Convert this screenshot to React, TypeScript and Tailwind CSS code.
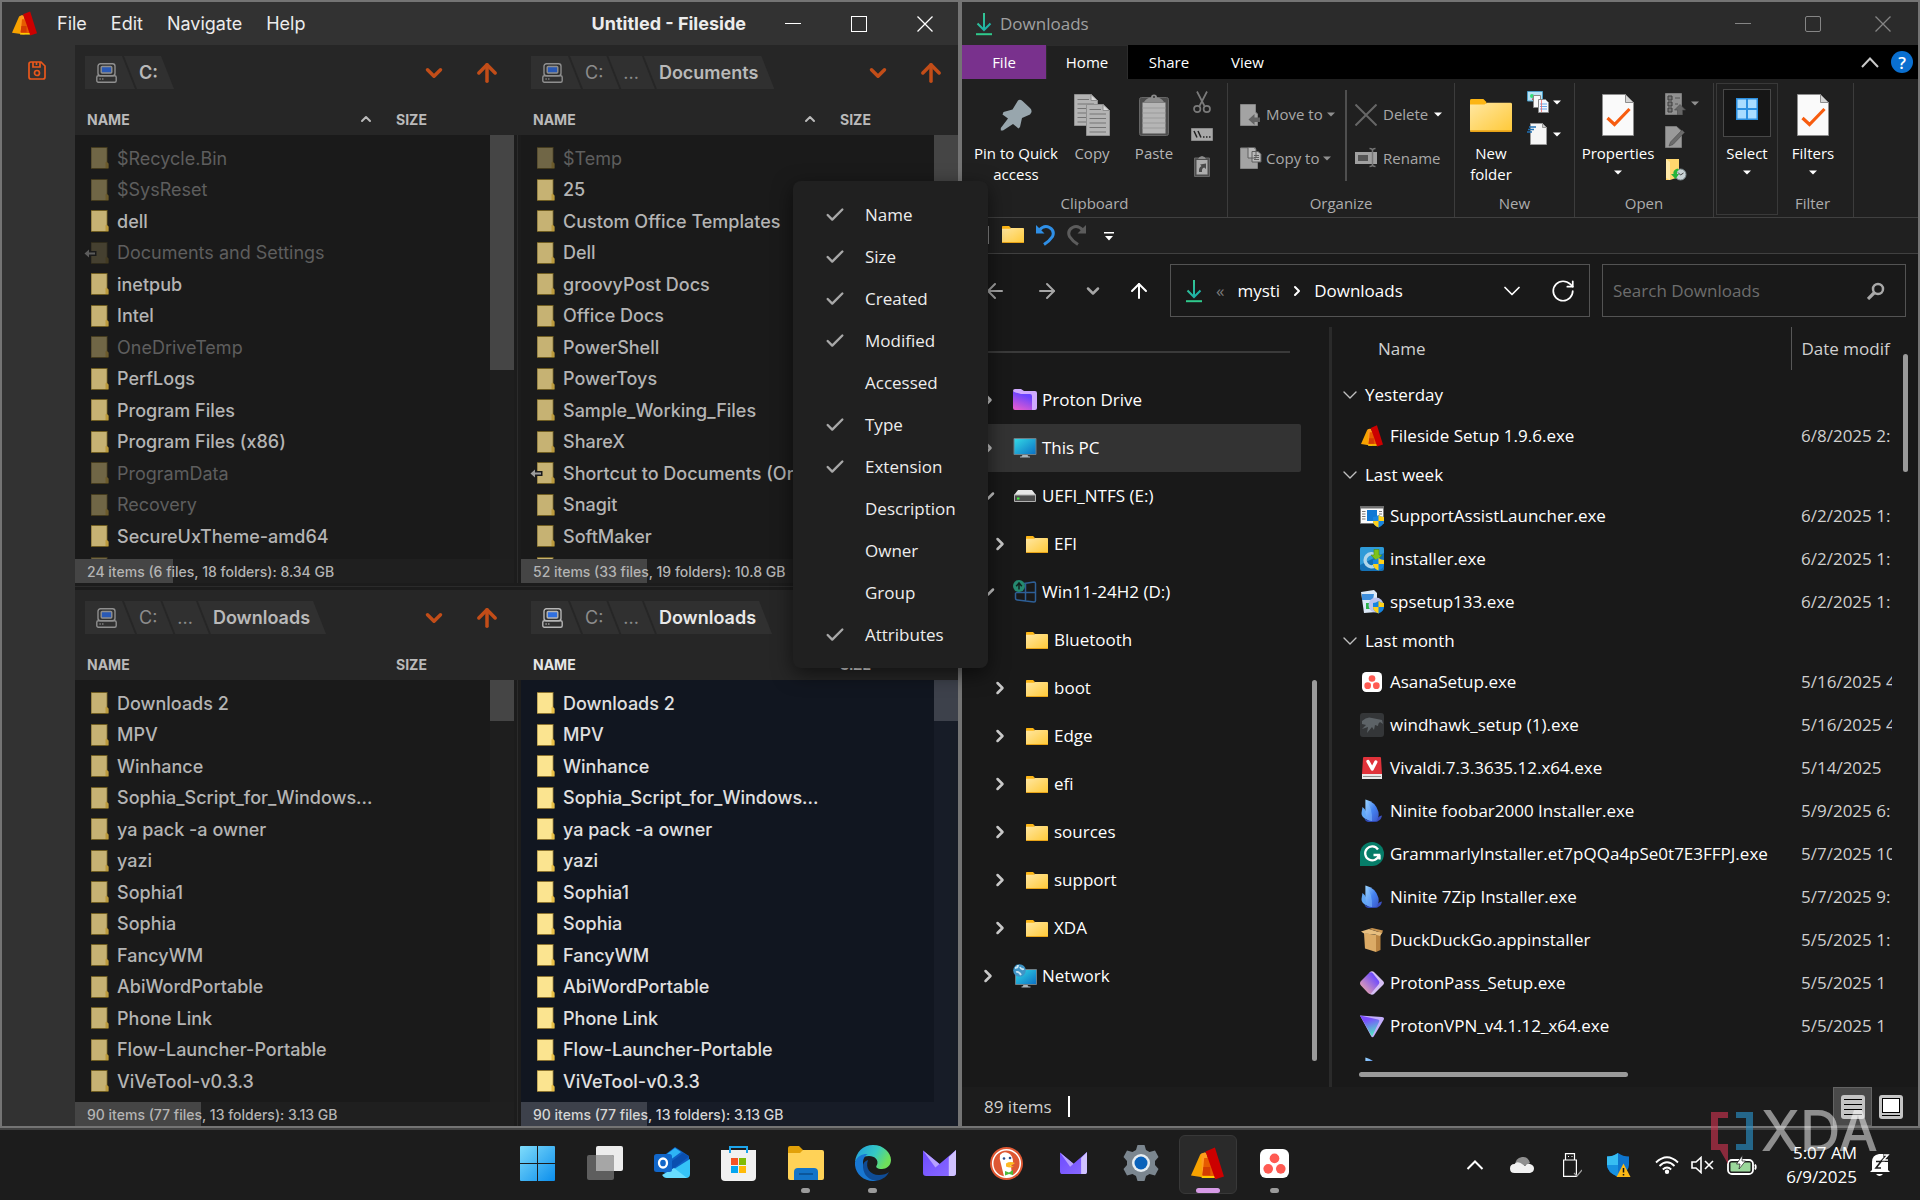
import React from 'react';
import { ArrowUp, ArrowLeft, ArrowRight, ChevronDown, ChevronRight, ChevronUp, Check, RotateCw } from 'lucide-react';

const UI = "font-['Open_Sans',sans-serif]";

/* ---------- shared icons ---------- */

function FilesideLogo({ className }: { className: string }) {
  return (
    <svg viewBox="0 0 24 24" className={className} aria-hidden="true">
      <path d="M6.8 5.2 10 3.800 12 22.600 0 20.800z" fill="#f7a200" />
      <path d="M7.5 4.800 11 4l6 18.400H8z" fill="#ff9a1f" />
      <path d="M8.600 20.600h10v2H7.600z" fill="#ffcc00" />
      <path d="M9.600 8h6l2.400 13H8.400z" fill="#e65a00" />
      <path d="M9 14.500h5v6H8.200z" fill="#d43c00" />
      <path d="M10.600 3.200 17.400.400 24 21.400l-6.400 2z" fill="#cc0000" />
    </svg>
  );
}

function Folder({ className, id }: { className: string; id: string }) {
  return (
    <svg viewBox="0 0 22 18" className={className} aria-hidden="true" preserveAspectRatio="none">
      <defs>
        <linearGradient id={id} x1="0" y1="0" x2="1" y2="1">
          <stop offset="0" stopColor="#ffe7a2" />
          <stop offset="1" stopColor="#ffc937" />
        </linearGradient>
      </defs>
      <path d="M0 .8Q0 0 .8 0H7l1.600 1.600V4H0z" fill="#fcb514" />
      <path d="M0 3h7.600l1.400-1h12.200q.8 0 .8.8V17q0 1-1 1H1q-1 0-1-1z" fill={`url(#${id})`} />
      <path d="M0 17h22q0 1-1 1H1q-1 0-1-1z" fill="#e8a317" />
    </svg>
  );
}

function DownloadGlyph({ id }: { id: string }) {
  return (
    <svg viewBox="0 0 16 24" className="h-6 w-4 shrink-0" fill="none" stroke={`url(#${id})`} strokeWidth="2" aria-hidden="true">
      <defs>
        <linearGradient id={id} gradientUnits="userSpaceOnUse" x1="0" y1="0" x2="16" y2="20">
          <stop offset="0" stopColor="#3fd08a" />
          <stop offset="1" stopColor="#12a6b0" />
        </linearGradient>
      </defs>
      <path d="M8 1v17M1.500 11.500 8 18l6.500-6.500" />
      <path d="M0 22.200h16" stroke="#2fc98c" />
    </svg>
  );
}

function Caret({ className = 'text-white' }: { className?: string }) {
  return (
    <svg viewBox="0 0 8 5" className={`h-[5px] w-2 shrink-0 ${className}`} aria-hidden="true">
      <path d="M0 .5h8L4 4.500z" fill="currentColor" />
    </svg>
  );
}

function WindowButtons({ className, width, round }: { className: string; width: string; round?: boolean }) {
  return (
    <div className={`flex ${className}`}>
      <button aria-label="Minimize" className={`flex items-center justify-center ${width}`}>
        <svg viewBox="0 0 16 16" className="size-4"><path d="M0 7.500h16" stroke="currentColor" /></svg>
      </button>
      <button aria-label="Maximize" className={`flex items-center justify-center ${width}`}>
        <svg viewBox="0 0 16 16" className="size-4"><rect x=".5" y=".5" width="15" height="15" rx={round ? 1.5 : 0} fill="none" stroke="currentColor" /></svg>
      </button>
      <button aria-label="Close" className={`flex items-center justify-center ${width}`}>
        <svg viewBox="0 0 16 16" className="size-4"><path d="m.5.500 15 15m0-15-15 15" stroke="currentColor" strokeWidth="1.300" /></svg>
      </button>
    </div>
  );
}

/* ---------- Fileside window ---------- */

type Entry = { name: string; dim?: boolean; link?: boolean; app?: boolean };

const rootEntries: Entry[] = [
  { name: '$Recycle.Bin', dim: true },
  { name: '$SysReset', dim: true },
  { name: 'dell' },
  { name: 'Documents and Settings', dim: true, link: true },
  { name: 'inetpub' },
  { name: 'Intel' },
  { name: 'OneDriveTemp', dim: true },
  { name: 'PerfLogs' },
  { name: 'Program Files' },
  { name: 'Program Files (x86)' },
  { name: 'ProgramData', dim: true },
  { name: 'Recovery', dim: true },
  { name: 'SecureUxTheme-amd64' },
  { name: '', dim: true },
];

const documentEntries: Entry[] = [
  { name: '$Temp', dim: true },
  { name: '25' },
  { name: 'Custom Office Templates' },
  { name: 'Dell' },
  { name: 'groovyPost Docs' },
  { name: 'Office Docs' },
  { name: 'PowerShell' },
  { name: 'PowerToys' },
  { name: 'Sample_Working_Files' },
  { name: 'ShareX' },
  { name: 'Shortcut to Documents (OneDrive)', link: true },
  { name: 'Snagit' },
  { name: 'SoftMaker' },
  { name: '' },
];

const downloadEntries: Entry[] = [
  { name: 'Downloads 2' },
  { name: 'MPV' },
  { name: 'Winhance' },
  { name: 'Sophia_Script_for_Windows...' },
  { name: 'ya pack -a owner' },
  { name: 'yazi' },
  { name: 'Sophia1' },
  { name: 'Sophia' },
  { name: 'FancyWM' },
  { name: 'AbiWordPortable' },
  { name: 'Phone Link' },
  { name: 'Flow-Launcher-Portable' },
  { name: 'ViVeTool-v0.3.3' },
  { name: '', app: true },
];

function PaneFolder({ entry, active }: { entry: Entry; active: boolean }) {
  const tone = entry.dim ? (entry.link ? 'opacity-25' : 'opacity-50') : '';
  const [face, edge, tab] = active ? ['#fbe490', '#8a7230', '#e9bf45'] : ['#c6b273', '#6f5d22', '#bb9a3c'];
  return (
    <svg viewBox="0 0 26 22" className="h-[22px] w-[26px] shrink-0" aria-hidden="true">
      <g className={tone}>
        <path d="M8 0h16.500v15l1 2v5H8z" fill={edge} />
        <path d="M8.500 1h15.200v20H8.500z" fill={face} />
        <path d="M23.200 14.500 25.500 16.500V21h-3v-5.500z" fill={tab} />
      </g>
      {entry.link && (
        <>
          <path d="M.500 11.500 7 5.500v3.500h6.500v5H7v3.500z" fill="#1a1a1a" />
          <path d="M1.500 11.500 6 7.500v3h6v2H6v3z" fill={entry.dim ? '#5c5c5c' : '#9c9c9c'} />
        </>
      )}
    </svg>
  );
}

function Crumb({ children, strong, active, first }: { children: React.ReactNode; strong?: boolean; active?: boolean; first?: boolean }) {
  return (
    <li
      className={`flex h-[33px] items-center bg-[#303030] ${first ? 'pr-[18px] pl-[11px] [clip-path:polygon(0_0,calc(100%-13px)_0,100%_100%,0_100%)]' : '-ml-[11px] pr-4 pl-[15px] [clip-path:polygon(0_0,calc(100%-13px)_0,100%_100%,13px_100%)]'} ${strong ? (active ? 'font-semibold text-[#e8e8e8]' : 'font-semibold text-[#b9b9b9]') : 'text-[#8c8c8c]'}`}
    >
      <button>{children}</button>
    </li>
  );
}

function Computer({ active }: { active: boolean }) {
  return (
    <svg viewBox="0 0 21 20" className="h-5 w-[21px]" fill="none" stroke={active ? '#b5b5b5' : '#8f8f8f'} strokeWidth="1.400" aria-label="This PC">
      <rect x="2" y=".8" width="17" height="12" rx="2.500" />
      <rect x="5.200" y="3.500" width="10.600" height="6.500" rx="1" fill={active ? '#2f6fe0' : '#2a59b5'} />
      <rect x=".8" y="12.800" width="19.400" height="6.400" rx="1.500" />
      <path d="M3.500 16h1.200m1.500 0h1.200" />
    </svg>
  );
}

type PaneProps = {
  crumbs: string[];
  entries: Entry[];
  status: string;
  usage: string;
  thumb: string;
  sorted?: boolean;
  active?: boolean;
};

function Pane({ crumbs, entries, status, usage, thumb, sorted = false, active = false }: PaneProps) {
  return (
    <section className="flex min-h-0 flex-col">
      <div className="flex h-[58px] shrink-0 items-start bg-[#262626] pt-[11px] pl-[10px]">
        <ol className="flex text-[18px]">
          <Crumb first><Computer active={active} /></Crumb>
          {crumbs.map((c, i) => (
            <Crumb key={c} strong={i === crumbs.length - 1} active={active}>{c}</Crumb>
          ))}
        </ol>
        <div className="ml-auto flex h-[33px] items-center text-[#c24d18]">
          <button aria-label="History" className="flex w-[52px] justify-center"><ChevronDown className="size-[26px]" strokeWidth={3.200} /></button>
          <button aria-label="Up one level" className="flex w-[54px] justify-center"><ArrowUp className="size-[28px]" strokeWidth={3} /></button>
        </div>
      </div>
      <div className="relative flex min-h-0 flex-1 flex-col">
        <table className="flex min-h-0 flex-1 flex-col">
          <thead className="block bg-[#262626]">
            <tr className={`flex h-8 items-center pl-3 text-[14px] ${active ? 'text-[#e6e6e6]' : 'text-[#bababa]'}`}>
              <th className="flex flex-1 items-center justify-between pr-[22px] font-bold">
                NAME{sorted && <ChevronUp className="size-4" strokeWidth={3} />}
              </th>
              <th className="w-[118px] text-left font-bold">SIZE</th>
            </tr>
          </thead>
          <tbody className={`block min-h-0 flex-1 overflow-hidden pt-[7px] ${active ? 'bg-[#111620]' : 'bg-[#1a1a1a]'}`}>
            {entries.map((e, i) => (
              <tr key={i} className={`flex items-center pl-2 ${i % 2 ? 'h-[31px]' : 'h-8'}`}>
                <td className="flex flex-1 items-center gap-2 whitespace-nowrap">
                  {e.app ? <FilesideLogo className="ml-2 size-[22px]" /> : <PaneFolder entry={e} active={active} />}
                  <span className={`text-[18px] ${e.dim ? 'text-[#5e5e5e]' : active ? 'font-medium text-[#e0e0e0]' : 'font-medium text-[#b4b4b4]'}`}>{e.name}</span>
                </td>
              </tr>
            ))}
          </tbody>
        </table>
        <div className={`absolute top-8 right-0 bottom-0 w-6 ${active ? 'bg-[#171c27]' : 'bg-[#1e1e1e]'}`}>
          <div className={`${thumb} ${active ? 'bg-[#3d414b]' : 'bg-[#454545]'}`} />
        </div>
      </div>
      <div className={`flex h-6 shrink-0 text-[14px] font-medium ${active ? 'bg-[#171c27] text-[#d6d6d6]' : 'bg-[#1f1f1f] text-[#b4b4b4]'}`}>
        <div className={`flex items-center pl-3 whitespace-nowrap ${usage} ${active ? 'bg-[#3d414b]' : 'bg-[#454545]'}`}>
          <span>{status}</span>
        </div>
      </div>
    </section>
  );
}

function Gutter() {
  return (
    <div className="flex flex-col">
      <div className="h-[90px] bg-[#262626]" />
      <div className="ml-[3px] w-px flex-1 bg-[#2b2b2b]" />
    </div>
  );
}

function FilesideWindow() {
  return (
    <section className="flex min-w-0 flex-1 flex-col border-2 border-[#747474] bg-[#323232] font-['Inter',sans-serif]">
      <header className="flex h-[43px] shrink-0 items-stretch text-white">
        <FilesideLogo className="ml-[10px] size-[25px] self-center" />
        <nav className="ml-2 flex text-[18px] text-[#ececec]">
          {['File', 'Edit', 'Navigate', 'Help'].map((m) => (
            <button key={m} className="px-3">{m}</button>
          ))}
        </nav>
        <h1 className="ml-auto self-center text-[18px] font-bold text-[#ececec]">Untitled - Fileside</h1>
        <WindowButtons width="w-[66px]" className="ml-[14px]" />
      </header>
      <div className="flex min-h-0 flex-1">
        <aside className="flex w-[73px] shrink-0 justify-center pt-[15px] pr-1">
          <button aria-label="Save layout" className="h-5">
            <svg viewBox="0 0 18 19" className="h-[19px] w-[18px]" fill="none" stroke="#e9581c" strokeWidth="1.700">
              <path d="M1 3q0-2 2-2h10l4 4v11q0 2-2 2H3q-2 0-2-2z" />
              <path d="M5 1v5h7V1M8.500 1v3" />
              <circle cx="9" cy="12" r="2.500" />
            </svg>
          </button>
        </aside>
        <div className="flex min-w-0 flex-1 flex-col bg-[#1c1c1c]">
          <div className="grid min-h-0 flex-[538] grid-cols-[minmax(0,439fr)_7px_minmax(0,437fr)]">
            <Pane crumbs={['C:']} entries={rootEntries} status="24 items (6 files, 18 folders): 8.34 GB" usage="w-[98px]" thumb="h-[235px]" sorted />
            <Gutter />
            <Pane crumbs={['C:', '...', 'Documents']} entries={documentEntries} status="52 items (33 files, 19 folders): 10.8 GB" usage="w-[126px]" thumb="h-[100px]" sorted />
          </div>
          <div className="flex h-[7px] shrink-0 items-center"><div className="h-px flex-1 bg-[#2b2b2b]" /></div>
          <div className="grid min-h-0 flex-[536] grid-cols-[minmax(0,439fr)_7px_minmax(0,437fr)]">
            <Pane crumbs={['C:', '...', 'Downloads']} entries={downloadEntries} status="90 items (77 files, 13 folders): 3.13 GB" usage="w-[126px]" thumb="h-[41px]" />
            <Gutter />
            <Pane crumbs={['C:', '...', 'Downloads']} entries={downloadEntries} status="90 items (77 files, 13 folders): 3.13 GB" usage="w-[126px]" thumb="h-[41px]" active />
          </div>
        </div>
      </div>
    </section>
  );
}

/* ---------- Column menu ---------- */

const columns: [string, boolean][] = [
  ['Name', true], ['Size', true], ['Created', true], ['Modified', true], ['Accessed', false], ['Type', true],
  ['Extension', true], ['Description', false], ['Owner', false], ['Group', false], ['Attributes', true],
];

function ColumnMenu() {
  return (
    <div role="menu" className={`absolute top-[181px] left-[793px] w-[195px] rounded-lg bg-[#202020] pt-[13px] pb-3 text-[17px] text-[#ededed] shadow-[0_6px_20px_rgba(0,0,0,0.55)] ${UI}`}>
      {columns.map(([name, on]) => (
        <button key={name} role="menuitemcheckbox" aria-checked={on} className="flex h-[42px] w-full items-center pl-[31px]">
          <span className="w-[41px]">{on && <Check className="size-[22px] text-[#a8a8a8]" strokeWidth={2.600} />}</span>
          {name}
        </button>
      ))}
    </div>
  );
}

/* ---------- Explorer ribbon ---------- */

function BigButton({ icon, label, width, muted, caret }: { icon: React.ReactNode; label: React.ReactNode; width: string; muted?: boolean; caret?: boolean }) {
  return (
    <button className={`mt-2 flex shrink-0 flex-col items-center ${width} ${muted ? 'text-[#b5b5b5]' : 'text-white'}`}>
      <span className="flex h-12 items-center">{icon}</span>
      <span className="mt-1 leading-[21px]">{label}</span>
      {caret && <span className="mt-[6px]"><Caret /></span>}
    </button>
  );
}

function RibbonGroup({ title, width, children }: { title: string; width: string; children: React.ReactNode }) {
  return (
    <div className={`flex shrink-0 flex-col border-r border-[#3c3c3c] ${width}`}>
      <div className="flex h-[110px]">{children}</div>
      <div className="text-center leading-[21px] text-[#adadad]">{title}</div>
    </div>
  );
}

function PropertiesIcon() {
  return (
    <svg viewBox="0 0 32 42" className="h-[42px] w-8">
      <path d="M.5.500H23.500L31.500 8.500v33H.5z" fill="#fafafa" stroke="#8d8d8d" />
      <path d="M23.500.500v8h8z" fill="#d5d5d5" stroke="#8d8d8d" />
      <path d="m5.500 24 7 6.500L27.500 15" fill="none" stroke="#f75c0f" strokeWidth="3.200" />
    </svg>
  );
}

function SheetLines({ x, y }: { x: number; y: number }) {
  return (
    <g transform={`translate(${x} ${y})`}>
      <path d="M.5.500H17l6.500 6V31.500H.5z" fill="#b4b4b4" stroke="#8f8f8f" />
      <path d="M17 .5v6h6.500z" fill="#dadada" stroke="#8f8f8f" />
      <path d="M3.500 5.500H15M3.500 10H20M3.500 14.500H20M3.500 19H20M3.500 23.500H20M3.500 28H20" stroke="#757575" strokeWidth="1.200" />
    </g>
  );
}

function Ribbon() {
  return (
    <div className="flex h-[139px] shrink-0 border-b border-[#404040] bg-[#202020] pt-[4px] text-[15px]">
      <RibbonGroup title="Clipboard" width="w-[266px]">
        <div className="flex gap-0.5 pl-[10px]">
          <BigButton
            width="w-[88px]"
            label={<>Pin to Quick<br />access</>}
            icon={
              <svg viewBox="0 0 32 32" className="size-8">
                <path d="M18 1.500Q20 0 22.500 2L30 9q2.500 2.500 1 5l-1 1.500-8 3.500-2 9-1.500 1.500L13 25l-10 6.500H.8l0-2.500L8 19.500l-5.500-4L3.500 13l9-2.500z" fill="#98a6ad" />
              </svg>
            }
          />
          <BigButton width="w-[60px]" muted label="Copy" icon={<svg viewBox="0 0 36 42" className="h-[42px] w-9"><SheetLines x={0} y={0} /><SheetLines x={12} y={10} /></svg>} />
          <BigButton
            width="w-[60px]"
            muted
            label="Paste"
            icon={
              <svg viewBox="0 0 30 42" className="h-[42px] w-[30px]">
                <rect x=".5" y="3.500" width="29" height="38" rx="2" fill="#4d4d4d" stroke="#666" />
                <path d="M3.500 8.500h23v31h-23z" fill="#b5b5b5" />
                <path d="M3.500 14h23m-23 5h23m-23 5h23m-23 5h23m-23 5h23" stroke="#9b9b9b" />
                <path d="M5 8Q8 3.500 12 3.500 12 .5 15 .5t3 3q4 0 7 4.500z" fill="#8b8b8b" />
                <circle cx="15" cy="3" r="1" fill="#333" />
              </svg>
            }
          />
        </div>
        <div className="ml-[6px] flex flex-col pt-[3px]">
          <button aria-label="Cut" className="flex h-8 w-6 items-center justify-center">
            <svg viewBox="0 0 18 24" className="h-6 w-[18px]" fill="none" stroke="#7a7a7a" strokeWidth="1.700">
              <path d="M4 1.500 11.500 16M14 1.500 6.500 16" />
              <circle cx="4.200" cy="19" r="3.200" /><circle cx="13.800" cy="19" r="3.200" />
            </svg>
          </button>
          <button aria-label="Copy path" className="flex h-8 w-6 items-center justify-center">
            <svg viewBox="0 0 22 13" className="h-[13px] w-[22px]">
              <path d="M.5.500h21v12H.5z" fill="#a8a8a8" stroke="#8a8a8a" />
              <path d="m3 3 3 6.500M7 3l3 6.500M12 9h1.500m1.500 0h1.500m1.500 0h1.500" stroke="#222" strokeWidth="1.500" />
            </svg>
          </button>
          <button aria-label="Paste shortcut" className="flex h-8 w-6 items-center justify-center">
            <svg viewBox="0 0 16 22" className="h-[22px] w-4">
              <path d="M.5 3h15v18.500H.5z" fill="#4d4d4d" stroke="#666" />
              <path d="M2.500 5h11v14.500h-11z" fill="#adadad" />
              <path d="M4 4q1-2.500 4-3 3 .5 4 3z" fill="#8b8b8b" />
              <path d="M5 17q-.5-4.500 2.500-6L6 9.500l6-1V14l-1.800-1.500Q7.500 13 8 17z" fill="#4a4a4a" />
            </svg>
          </button>
        </div>
      </RibbonGroup>

      <RibbonGroup title="Organize" width="w-[227px]">
        <div className="flex w-[117px] flex-col pt-[10px] pl-3 text-[#a8a8a8]">
          <button className="flex h-[43px] items-center gap-1 whitespace-nowrap">
            <svg viewBox="0 0 22 22" className="size-[22px] shrink-0">
              <path d="M.5.500h15V8l2 2v11.500H.5z" fill="#a3a3a3" stroke="#858585" />
              <path d="M8.500 15.500 14.500 10v3.500H20v4.500h-5.500V21z" fill="#636363" />
            </svg>
            Move to <Caret className="text-[#909090]" />
          </button>
          <button className="flex h-11 items-center gap-1 whitespace-nowrap">
            <svg viewBox="0 0 22 22" className="size-[22px] shrink-0">
              <path d="M.5 1h15v7l2 2v11.500H.5z" fill="#a3a3a3" stroke="#858585" />
              <path d="M8 .5h6l2 2V11H8zM12 4.500h6l3 2.500v8h-9z" fill="#b9b9b9" stroke="#5f5f5f" />
              <path d="M14 8.500h5m-5 2h5m-5 2h5" stroke="#5f5f5f" />
            </svg>
            Copy to <Caret className="text-[#909090]" />
          </button>
        </div>
        <div className="mt-[7px] h-[91px] w-0.5 bg-[#4f4f4f]" />
        <div className="flex flex-col pt-[10px] pl-2 text-[#a8a8a8]">
          <button className="flex h-[43px] items-center gap-[6px] whitespace-nowrap">
            <svg viewBox="0 0 22 22" className="size-[22px] shrink-0"><path d="m.5.500 21 21m0-21-21 21" stroke="#666" strokeWidth="2" /></svg>
            Delete <Caret />
          </button>
          <button className="flex h-11 items-center gap-[6px] whitespace-nowrap">
            <svg viewBox="0 0 22 22" className="size-[22px] shrink-0">
              <path d="M0 5h22v12H0z" fill="#a0a0a0" /><path d="M3 8h10v6H3z" fill="#555" />
              <path d="M14.500 1.500q3 0 3 2v14q0 2-3 2m6-18q-3 0-3 2m0 14q0 2 3 2" fill="none" stroke="#777" strokeWidth="1.500" />
            </svg>
            Rename
          </button>
        </div>
      </RibbonGroup>

      <RibbonGroup title="New" width="w-[120px]">
        <div className="pl-[5px]">
          <BigButton width="w-[62px]" label={<>New<br />folder</>} icon={<Folder id="rib" className="h-[33px] w-[42px]" />} />
        </div>
        <div className="flex flex-col pt-[3px] pl-[5px]">
          <button aria-label="New item" className="flex h-8 items-center gap-1">
            <svg viewBox="0 0 22 22" className="size-[22px]">
              <path d="M.5.500h15v9.500H.5z" fill="#b7e3f5" stroke="#4d9fc9" /><circle cx="5" cy="5" r="2" fill="#3d7" /><path d="M5 9q0-3 3-3l3 3z" fill="#b55" />
              <path d="M6.500 4.500h7v12h-7z" fill="#f8f8f8" stroke="#888" />
              <path d="M11.500 8.500h7l3 3v10h-10z" fill="#f4f8ff" stroke="#888" />
              <path d="M13 13h7m-7 2.500h7M13 18h7" stroke="#6aa5e6" /><path d="M14.500 9v12" stroke="#e66" strokeWidth=".8" />
            </svg>
            <Caret />
          </button>
          <button aria-label="Easy access" className="flex h-8 items-center gap-1">
            <svg viewBox="0 0 22 22" className="size-[22px]">
              <path d="M3.500.500h12l4 4v17h-16z" fill="#f6f6f6" stroke="#999" /><path d="M15.500.500v4h4z" fill="#ccc" stroke="#999" />
              <path d="M2 4h7M1 6.500h6M0 9h5" stroke="#1f6fb2" strokeWidth="1.300" />
            </svg>
            <Caret />
          </button>
        </div>
      </RibbonGroup>

      <RibbonGroup title="Open" width="w-[139px]">
        <div className="pl-[3px]">
          <BigButton width="w-[80px]" label="Properties" caret icon={<PropertiesIcon />} />
        </div>
        <div className="flex flex-col pt-1 pl-[7px]">
          <button aria-label="Open" className="flex h-[33px] items-center gap-1">
            <svg viewBox="0 0 22 22" className="size-[22px]">
              <path d="M.5.500h16v21H.5z" fill="#919191" stroke="#7b7b7b" />
              <path d="M3 3h4v4H3zm0 6h4v4H3zm0 6h4v4H3z" fill="#777" stroke="#3c3c3c" />
              <path d="M10 5h5m-5 6h3" stroke="#555" />
              <path d="m15 11.500 5.500 5.500h-3v5h-5v-5h-3z" fill="#666" stroke="#4c4c4c" strokeWidth=".6" />
            </svg>
            <Caret className="text-[#909090]" />
          </button>
          <button aria-label="Edit" className="flex h-[33px] items-center">
            <svg viewBox="0 0 22 22" className="size-[22px]">
              <path d="M.5.500h11l5 4.500v16.500H.5z" fill="#9a9a9a" stroke="#7b7b7b" />
              <path d="M4 20 5.500 16 17 4l2.500 2.500L8 18.500z" fill="#6b6b6b" stroke="#4a4a4a" strokeWidth=".6" />
            </svg>
          </button>
          <button aria-label="History" className="flex h-[33px] items-center">
            <svg viewBox="0 0 22 22" className="size-[22px]">
              <path d="M1 0h13v18l-9 3H1z" fill="#ffd66e" /><path d="m1 0 4 3v18l-4-2z" fill="#ffe9a8" />
              <circle cx="15.500" cy="15.500" r="5.500" fill="#c9d3d6" stroke="#7e8b8f" /><path d="M13 13.500 15.500 16l3-2" stroke="#444" fill="none" />
              <path d="M12.500 9.500Q7.500 11 8.500 15H6l4.500 5 3.500-5h-2q-.5-3 2-4z" fill="#27b43a" />
            </svg>
          </button>
        </div>
      </RibbonGroup>

      <div className="ml-0.5 flex h-[132px] w-[62px] shrink-0 flex-col items-center border border-[#393939]">
        <button className="flex flex-col items-center text-white">
          <span className="mt-[5px] flex size-12 items-start justify-center border border-[#484848] bg-[#161616] pt-2">
            <svg viewBox="0 0 22 22" className="size-[22px]">
              <path d="M0 0h22v22H0z" fill="#2b8fe0" />
              <path d="M1.500 1.500h8.500v8.500H1.500zm10.500 0h8.500v8.500H12zM1.500 12h8.500v8.500H1.500zm10.500 0h8.500v8.500H12z" fill="#a9dcff" />
            </svg>
          </span>
          <span className="mt-[6px] leading-[21px]">Select</span>
          <span className="mt-[6px]"><Caret /></span>
        </button>
      </div>
      <div className="flex w-[76px] shrink-0 flex-col border-r border-[#3c3c3c] pr-[6px]">
        <div className="h-[110px]"><BigButton width="w-[70px]" label="Filters" caret icon={<PropertiesIcon />} /></div>
        <div className="text-center leading-[21px] text-[#adadad]">Filter</div>
      </div>
    </div>
  );
}

/* ---------- Explorer content ---------- */

type Node = { name: string; level: 1 | 2; state?: 'open' | 'closed'; icon: React.ReactNode; selected?: boolean };

const monitor = (
  <svg viewBox="0 0 24 20" className="h-5 w-6">
    <defs><linearGradient id="mon" x1="0" y1="0" x2="1" y2="1"><stop offset="0" stopColor="#34dbe6" /><stop offset="1" stopColor="#0b6fc4" /></linearGradient></defs>
    <path d="M1 .5h22v16H1z" fill="url(#mon)" stroke="#6d7f88" />
    <path d="M9.500 17h5l1 1.500h1.500v1H7v-1h1.500z" fill="#a9b4ba" />
  </svg>
);

const tree: Node[] = [
  {
    name: 'Proton Drive', level: 1, state: 'closed',
    icon: (
      <svg viewBox="0 0 24 22" className="h-[22px] w-6">
        <defs><linearGradient id="pd" x1=".7" y1="0" x2=".3" y2="1"><stop offset=".2" stopColor="#6b43ff" /><stop offset="1" stopColor="#e05ad0" /></linearGradient></defs>
        <path d="M0 2q0-2 2-2h6l3 2h11q2 0 2 2v15q0 2-2 2H8z" fill="#cfa9ff" />
        <path d="M0 2.500Q4 4 8 5h9q2 0 2 2v14H2q-2 0-2-2z" fill="url(#pd)" />
      </svg>
    ),
  },
  { name: 'This PC', level: 1, state: 'closed', icon: monitor, selected: true },
  {
    name: 'UEFI_NTFS (E:)', level: 1, state: 'open',
    icon: (
      <svg viewBox="0 0 24 14" className="h-[14px] w-6">
        <path d="M5 1h14l4 5H1z" fill="#e6e6e6" /><path d="M1.500 6h21v6.500h-21z" fill="#4c4c4c" stroke="#b0b0b0" /><path d="M4 8.500h2.500v2H4z" fill="#3ef03e" />
      </svg>
    ),
  },
  { name: 'EFI', level: 2, state: 'closed', icon: <Folder id="t1" className="h-[17px] w-[22px]" /> },
  {
    name: 'Win11-24H2 (D:)', level: 1, state: 'open',
    icon: (
      <svg viewBox="0 0 24 24" className="size-6" fill="none">
        <path d="M11 3.500 21 2q1.500 0 1.500 1.500v17Q22.500 22 21 22L4.500 20Q2.500 20 2.500 18v-5M2.500 12.500h20M12.500 4v17" stroke="#2e5f96" strokeWidth="1.500" />
        <circle cx="6" cy="6" r="6" fill="#258a70" /><path d="M6 9.500v-6m-2.800 2.800L6 3l2.800 3.300" stroke="#10221d" strokeWidth="1.500" />
      </svg>
    ),
  },
  { name: 'Bluetooth', level: 2, icon: <Folder id="t2" className="h-[17px] w-[22px]" /> },
  { name: 'boot', level: 2, state: 'closed', icon: <Folder id="t3" className="h-[17px] w-[22px]" /> },
  { name: 'Edge', level: 2, state: 'closed', icon: <Folder id="t4" className="h-[17px] w-[22px]" /> },
  { name: 'efi', level: 2, state: 'closed', icon: <Folder id="t5" className="h-[17px] w-[22px]" /> },
  { name: 'sources', level: 2, state: 'closed', icon: <Folder id="t6" className="h-[17px] w-[22px]" /> },
  { name: 'support', level: 2, state: 'closed', icon: <Folder id="t7" className="h-[17px] w-[22px]" /> },
  { name: 'XDA', level: 2, state: 'closed', icon: <Folder id="t8" className="h-[17px] w-[22px]" /> },
  {
    name: 'Network', level: 1, state: 'closed',
    icon: (
      <svg viewBox="0 0 24 24" className="size-6">
        <path d="M2.500 5.500h21v15h-21z" fill="url(#mon)" stroke="#6d7f88" /><path d="M10.500 21h4l1 1.500h2v1h-9v-1h1z" fill="#a9b4ba" />
        <circle cx="6.500" cy="6.500" r="6.300" fill="#3f94c6" /><path d="M2 4q3 0 3-3M7 3q1 3 4 2M3 8q3-1 5 3" stroke="#c7e6f5" strokeWidth="1.800" fill="none" />
      </svg>
    ),
  },
];

const ninite = (
  <svg viewBox="0 0 24 24" className="size-6">
    <defs><linearGradient id="nin" x1="0" y1="0" x2="1" y2="1"><stop offset="0" stopColor="#9fd8ff" /><stop offset=".5" stopColor="#4685f2" /><stop offset="1" stopColor="#3a55c8" /></linearGradient></defs>
    <path d="M2.500 8Q7 11 9 21.500 1 19 1.500 14z" fill="#63a8f5" />
    <path d="M22 16.500q-4 .5-7 5.500h3q3-1 4-5.500z" fill="#3b4fc0" />
    <path d="M5.500.500Q16 3 18.500 13q1 6-3 9.500H10Q6.500 21 5.500 14z" fill="url(#nin)" />
    <path d="M5.500.500Q13 9 12 22.500H10Q6.500 21 5.500 14z" fill="#8fc8ff" opacity=".45" />
    <path d="M4 19q5 4 14 3l-1 1H8q-3-1-4-4z" fill="#2f49b8" />
  </svg>
);

const shield = (
  <g transform="translate(13 11)">
    <path d="M5.500 0Q8 2 11 2v4q0 4-5.500 6.500Q0 10 0 6V2q3 0 5.500-2z" fill="#1685e0" />
    <path d="M5.500 0v6H11V2q-3 0-5.500-2zM5.500 6v6.500Q0 10 0 6z" fill="#ffd11a" />
  </g>
);

type FileRow = { group: string } | { name: string; date: string; icon: React.ReactNode };

const files: FileRow[] = [
  { group: 'Yesterday' },
  { name: 'Fileside Setup 1.9.6.exe', date: '6/8/2025 2:', icon: <FilesideLogo className="mx-px size-[22px]" /> },
  { group: 'Last week' },
  {
    name: 'SupportAssistLauncher.exe', date: '6/2/2025 1:',
    icon: (
      <svg viewBox="0 0 24 24" className="size-6">
        <path d="M.5 2.500h23v17H.5z" fill="#fafafa" stroke="#777" /><path d="M0 2h24v2.500H0z" fill="#6f6f6f" />
        <path d="M2 7.500h3.500M2 10h3.500M2 12.500h3.500M2 15h3.500M19 7.500h3M19 10h3" stroke="#777" /><path d="M7 6h10v11H7z" fill="#0f78d4" />{shield}
      </svg>
    ),
  },
  {
    name: 'installer.exe', date: '6/2/2025 1:',
    icon: (
      <svg viewBox="0 0 24 24" className="size-6">
        <rect width="24" height="24" rx="2" fill="#1470b4" /><path d="M0 18V2q0-2 2-2h20q2 0 2 2v4z" fill="#2f9bd8" />
        <path d="M15.500 8a6.500 6.500 0 1 0 0 10.500" fill="none" stroke="#b0d6ea" strokeWidth="3.500" /><path d="M14 2.500h5V8h3l-5.500 6L11 8h3z" fill="#7cc21a" stroke="#4f8a10" strokeWidth=".6" />{shield}
      </svg>
    ),
  },
  {
    name: 'spsetup133.exe', date: '6/2/2025 1:',
    icon: (
      <svg viewBox="0 0 24 24" className="size-6">
        <path d="m1 2 13-2 3 3v19L4 23z" fill="#dce9f7" /><path d="M2 4h12l-1 6H2z" fill="#3f8fdc" /><path d="M6 13h5v6H6z" fill="#2db34a" />
        <circle cx="16" cy="15" r="7.500" fill="#bcc3ee" />{shield}
      </svg>
    ),
  },
  { group: 'Last month' },
  { name: 'AsanaSetup.exe', date: '5/16/2025 4', icon: <AsanaIcon className="mx-0.5 size-5" /> },
  {
    name: 'windhawk_setup (1).exe', date: '5/16/2025 4',
    icon: (
      <svg viewBox="0 0 24 24" className="size-6">
        <rect width="24" height="24" rx="3" fill="#343638" /><path d="M2 8q5-5 10-3 5 1 10 2l1 4-3-2q-2 1-2 4l-3-1-1 5-2-3-5 6 1-6-6 2 4-4-4-1z" fill="#5d6367" />
      </svg>
    ),
  },
  {
    name: 'Vivaldi.7.3.3635.12.x64.exe', date: '5/14/2025',
    icon: (
      <svg viewBox="0 0 24 24" className="size-6">
        <path d="M4 1h16q1 0 1 1l1 16H2L3 2q0-1 1-1z" fill="#e0323a" /><path d="M2 18h20v5H2z" fill="#e9e9e9" /><path d="M3 20.500h18" stroke="#8f8f8f" />
        <path d="m8 5.500 4.200 7.500 3.600-7" fill="none" stroke="#fff" strokeWidth="3.300" strokeLinecap="round" strokeLinejoin="round" />
      </svg>
    ),
  },
  { name: 'Ninite foobar2000 Installer.exe', date: '5/9/2025 6:', icon: ninite },
  {
    name: 'GrammarlyInstaller.et7pQQa4pSe0t7E3FFPJ.exe', date: '5/7/2025 10',
    icon: (
      <svg viewBox="0 0 24 24" className="size-6">
        <path d="M12 0a12 12 0 0 1 0 24H0V12A12 12 0 0 1 12 0z" fill="#067d69" />
        <path d="M18 7.500A7 7 0 1 0 19 13h-5.500M19.500 13v4.500" fill="none" stroke="#fff" strokeWidth="2.300" />
      </svg>
    ),
  },
  { name: 'Ninite 7Zip Installer.exe', date: '5/7/2025 9:', icon: ninite },
  {
    name: 'DuckDuckGo.appinstaller', date: '5/5/2025 1:',
    icon: (
      <svg viewBox="0 0 24 24" className="size-6">
        <path d="m4 5 12 2v17L5 20.500z" fill="#dcab66" /><path d="m16 7 4.500-2v17L16 24z" fill="#b98341" />
        <path d="M1 3.500 9 1l8 2.500 5.500 1L20 8l-5-1.500L4 5.500z" fill="#e8bf80" /><path d="m9 1 3-1 11 2.500-1 2.500-6-2z" fill="#c8934f" />
      </svg>
    ),
  },
  {
    name: 'ProtonPass_Setup.exe', date: '5/5/2025 1',
    icon: (
      <svg viewBox="0 0 24 24" className="size-6">
        <defs><linearGradient id="pp" x1="1" y1="0" x2="0" y2="1"><stop offset=".2" stopColor="#6d4aff" /><stop offset="1" stopColor="#ffb59c" /></linearGradient></defs>
        <path d="M9.500 1.500q2.500-2.500 5 0l8.500 8.500q2 2 0 4l-8.500 8.500q-2.500 2.500-5 0L7 20z" fill="#d5bff5" />
        <path d="M9 2q2-1.500 4 .5l5.500 7q1.500 2 0 4L11 22.500q-1 1-3-.5L1 14.500q-2-2.500 0-4.500z" fill="url(#pp)" />
      </svg>
    ),
  },
  {
    name: 'ProtonVPN_v4.1.12_x64.exe', date: '5/5/2025 1',
    icon: (
      <svg viewBox="0 0 24 24" className="size-6">
        <defs><linearGradient id="pv" x1=".3" y1="0" x2=".6" y2="1"><stop offset=".2" stopColor="#7a4dff" /><stop offset="1" stopColor="#4ff0c0" /></linearGradient></defs>
        <path d="M0 1.500 22 3q3 .5 1.500 3L14 22q-1.500 2.500-3 0z" fill="#c3aefc" /><path d="m0 1.500 18 4q2 .5 1 2.500l-7 14.500z" fill="url(#pv)" />
      </svg>
    ),
  },
  { name: '', date: '', icon: ninite },
];

function AsanaIcon({ className }: { className: string }) {
  return (
    <svg viewBox="0 0 24 24" className={className} aria-hidden="true">
      <rect width="24" height="24" rx="5" fill="#fff" />
      <circle cx="12" cy="7.800" r="4" fill="#ff5a52" /><circle cx="6.800" cy="16.400" r="4" fill="#ff5a52" /><circle cx="17.200" cy="16.400" r="4" fill="#ff5a52" />
    </svg>
  );
}

function ExplorerWindow() {
  return (
    <section className={`flex min-w-0 flex-1 flex-col border-2 border-[#747474] bg-[#191919] text-white ${UI}`}>
      <header className="flex h-[43px] shrink-0 items-center bg-[#2b2b2b] text-[#a0a0a0]">
        <span className="ml-[14px] flex"><DownloadGlyph id="dg1" /></span>
        <h2 className="ml-2 text-[17px]">Downloads</h2>
        <WindowButtons width="w-[70px]" round className="ml-auto h-full text-[#858585]" />
      </header>

      <div className="flex h-[34px] shrink-0 bg-black text-[15px]">
        <button className="w-[84px] bg-[#79318d]">File</button>
        <button className="w-[82px] border-x border-t border-[#2c2c2c] bg-[#202020]">Home</button>
        <button className="w-[82px]">Share</button>
        <button className="w-[75px]">View</button>
        <div className="ml-auto flex items-center gap-3 pr-[5px]">
          <button aria-label="Collapse ribbon">
            <svg viewBox="0 0 18 12" className="h-3 w-[18px]"><path d="m1 11 8-8.500 8 8.500" fill="none" stroke="#c9c9c9" strokeWidth="2" /></svg>
          </button>
          <button aria-label="Help" className="flex size-[22px] items-center justify-center rounded-full bg-[#0a6fd0] text-[17px] leading-none font-semibold">?</button>
        </div>
      </div>

      <Ribbon />

      <div className="flex h-9 shrink-0 items-center border-b border-[#404040] bg-[#202020] pb-0.5 pl-[26px]">
        <div className="h-[18px] w-px bg-[#8a8a8a]" />
        <button aria-label="New folder" className="ml-[13px]"><Folder id="qat" className="h-[17px] w-[22px]" /></button>
        <button aria-label="Undo" className="ml-[11px]">
          <svg viewBox="0 0 20 22" className="h-[22px] w-5" fill="none" stroke="#2f8fe6" strokeWidth="3">
            <path d="M4 6.500Q9 .5 14.500 3.500t3 9Q15 16.500 9 20.500" /><path d="M1 1v8.500h8.500z" fill="#2f8fe6" stroke="none" />
          </svg>
        </button>
        <button aria-label="Redo" className="ml-3">
          <svg viewBox="0 0 20 22" className="h-[22px] w-5" fill="none" stroke="#5c5c5c" strokeWidth="3">
            <path d="M16 6.500Q11 .5 5.500 3.500t-3 9Q5 16.500 11 20.500" /><path d="M19 1v8.500h-8.500z" fill="#5c5c5c" stroke="none" />
          </svg>
        </button>
        <button aria-label="Customize toolbar" className="mt-1 ml-[17px]">
          <svg viewBox="0 0 10 9" className="h-[9px] w-[10px]" fill="#fff"><path d="M0 0h10v1.500H0zM1 4h8L5 8.500z" /></svg>
        </button>
      </div>

      <div className="flex h-[73px] shrink-0 items-center">
        <div className="flex w-[208px] shrink-0 items-center pl-[21px] text-[#a6a6a6]">
          <button aria-label="Back"><ArrowLeft className="size-6" /></button>
          <button aria-label="Forward" className="ml-[28px]"><ArrowRight className="size-6" /></button>
          <button aria-label="Recent" className="ml-6"><ChevronDown className="size-5" strokeWidth={3} /></button>
          <button aria-label="Up" className="ml-6 text-white"><ArrowUp className="size-6" /></button>
        </div>
        <div className="flex h-[53px] flex-1 items-center border border-[#535353] pl-[15px] text-[17px]">
          <DownloadGlyph id="dg2" />
          <span className="ml-[14px] text-[#7a7a7a]">«</span>
          <button className="ml-[13px]">mysti</button>
          <ChevronRight className="mx-[9px] size-4" strokeWidth={3} />
          <button>Downloads</button>
          <button aria-label="Address history" className="ml-auto"><ChevronDown className="size-7" strokeWidth={1.500} /></button>
          <button aria-label="Refresh" className="mr-[13px] ml-6"><RotateCw className="size-[26px]" strokeWidth={1.600} /></button>
        </div>
        <label className="mr-3 ml-3 flex h-[53px] w-[304px] shrink-0 items-center border border-[#535353] pr-5 pl-[10px]">
          <input aria-label="Search Downloads" placeholder="Search Downloads" className="min-w-0 flex-1 bg-transparent text-[17px] placeholder-[#6d6d6d] outline-none" />
          <svg viewBox="0 0 18 18" className="size-[18px]" fill="none" stroke="#a8a8a8"><circle cx="11" cy="7" r="5" strokeWidth="2.500" /><path d="m7.500 10.500-6.500 6.500" strokeWidth="3.200" /></svg>
        </label>
      </div>

      <div className="flex min-h-0 flex-1">
        <nav className="flex w-[370px] shrink-0 border-r-[3px] border-[#2a2a2a]">
          <ul className="w-[339px] pt-6 text-[17px]">
            <li aria-hidden="true" className="mr-[11px] mb-[23px] h-0.5 bg-[#3a3a3a]" />
            {tree.map((n) => (
              <li key={n.name}>
                <button className={`flex h-12 w-full items-center ${n.level === 1 ? 'pl-4' : 'pl-7'} ${n.selected ? 'rounded-xs bg-[#333]' : ''}`}>
                  <span className={`text-[#c8c8c8] ${n.level === 1 ? 'w-[35px]' : 'w-9'}`}>
                    {n.state === 'closed' && <ChevronRight className="size-5" strokeWidth={3} />}
                    {n.state === 'open' && <ChevronDown className="size-5" strokeWidth={3} />}
                  </span>
                  <span className={n.level === 1 ? 'mr-[5px]' : 'mr-[6px]'}>{n.icon}</span>
                  {n.name}
                </button>
              </li>
            ))}
          </ul>
          <div className="mt-[353px] mb-[26px] ml-[11px] w-[5px] rounded-full bg-[#9a9a9a]" />
        </nav>
        <div className="flex min-w-0 flex-1 flex-col">
          <div className="flex min-h-0 flex-1">
            <div className="min-w-0 flex-1 overflow-hidden">
              <table className="w-full table-fixed text-[17px]">
                <colgroup><col /><col className="w-[101px]" /></colgroup>
                <thead>
                  <tr className="h-[43px] text-[#d0d0d0]">
                    <th className="border-r border-[#575757] pl-[46px] text-left font-normal">Name</th>
                    <th className="overflow-hidden pl-[10px] text-left font-normal whitespace-nowrap">Date modif</th>
                  </tr>
                </thead>
                <tbody>
                  <tr aria-hidden="true" className="h-[7px]"><td /><td /></tr>
                  {files.map((f, i) =>
                    'group' in f ? (
                      <tr key={i} className="h-[37px]">
                        <th colSpan={2} className="p-0 text-left align-top font-normal">
                          <span className="flex items-center gap-[3px] pt-[5px] pl-[6px]"><ChevronDown className="size-6 text-[#c0c0c0]" strokeWidth={1.400} />{f.group}</span>
                        </th>
                      </tr>
                    ) : (
                      <tr key={i} className="h-[43px]">
                        <td className="p-0"><span className="flex items-center gap-[6px] pl-7 whitespace-nowrap">{f.icon}{f.name}</span></td>
                        <td className="overflow-hidden p-0 pl-[10px] whitespace-nowrap text-[#cfcfcf]">{f.date}</td>
                      </tr>
                    ),
                  )}
                </tbody>
              </table>
            </div>
            <div className="w-[26px] shrink-0 pt-[27px] pl-[11px]"><div className="h-[118px] w-[5px] rounded-full bg-[#9a9a9a]" /></div>
          </div>
          <div className="h-[26px] shrink-0 pt-[11px] pl-[27px]"><div className="h-[5px] w-[269px] rounded-full bg-[#9a9a9a]" /></div>
        </div>
      </div>

      <footer className="flex h-[39px] shrink-0 items-center bg-[#1c1c1c] text-[17px] text-[#d0d0d0]">
        <span className="pl-[22px]">89 items</span>
        <span className="ml-4 h-[21px] w-0.5 bg-white" />
        <button aria-label="Details view" className="ml-auto flex h-full w-[39px] items-center justify-center border border-[#636363] bg-[#4a4a4a]">
          <svg viewBox="0 0 24 24" className="size-6"><rect width="24" height="24" rx="3" fill="#c4c4c4" /><path d="M3 4.500h18M3 9.500h18M3 14.500h18M3 19.500h18" stroke="#000" /></svg>
        </button>
        <button aria-label="Large icons view" className="mr-[15px] ml-[7px]">
          <svg viewBox="0 0 24 24" className="size-6"><rect width="24" height="24" rx="3" fill="#c4c4c4" /><rect x="3.500" y="3.500" width="17" height="14" fill="#fff" stroke="#000" /><path d="M3 20.500h18" stroke="#000" /></svg>
        </button>
      </footer>
    </section>
  );
}

/* ---------- Taskbar ---------- */

function MailM({ className, id }: { className: string; id: string }) {
  return (
    <svg viewBox="0 0 32 26" className={className} preserveAspectRatio="none">
      <defs><linearGradient id={id} x1="0" y1="0" x2="1" y2="1"><stop offset="0" stopColor="#6d4aff" /><stop offset="1" stopColor="#8a6bff" /></linearGradient></defs>
      <path d="M0 .5 16 14 32 0v23q0 3-3 3H3q-3 0-3-3z" fill={`url(#${id})`} />
      <path d="M0 .5 16 14l-4 3.500Z" fill="#b7a1ff" />
      <path d="m25 7 7-7v23q0 3-3 3h-4z" fill="#d0c2ff" />
    </svg>
  );
}

const taskIcons: { name: string; running?: boolean; active?: boolean; icon: React.ReactNode }[] = [
  {
    name: 'Start',
    icon: (
      <svg viewBox="0 0 35 35" className="size-[35px]">
        <defs><linearGradient id="st" gradientUnits="userSpaceOnUse" x1="0" y1="0" x2="35" y2="35"><stop offset="0" stopColor="#7fdcfb" /><stop offset="1" stopColor="#0b8eec" /></linearGradient></defs>
        <path d="M0 1q0-1 1-1h16v17H0zM18 0h16q1 0 1 1v16H18zM0 18h17v17H1q-1 0-1-1zM18 18h17v16q0 1-1 1H18z" fill="url(#st)" />
      </svg>
    ),
  },
  {
    name: 'Task view',
    icon: (
      <svg viewBox="0 0 36 34" className="h-[34px] w-9">
        <rect x="9" y="0" width="27" height="25" rx="2" fill="#ececec" /><rect x="0" y="9" width="27" height="25" rx="2" fill="#5e5e5e" /><path d="M9 9h16q2 0 2 2v14H9z" fill="#a6a6a6" />
      </svg>
    ),
  },
  {
    name: 'Outlook',
    icon: (
      <svg viewBox="0 0 36 32" className="h-8 w-9">
        <path d="m8 10 13-10 14 9v8L20 30 7 24z" fill="#0f5fc4" /><path d="m9 10 12-9 6 4-15 11z" fill="#2db4f5" /><path d="m14 17 15-11 6 3.500-17 13z" fill="#0a4fb0" />
        <path d="M36 12v15q0 4-4 4H13q-3 0-4-2z" fill="#35c3f7" /><path d="M13 31q-3 0-5-3l12-7 13 10z" fill="#67dcff" />
        <rect y="7" width="18" height="18" rx="2.500" fill="#1166c9" /><ellipse cx="9" cy="16" rx="4" ry="4.500" fill="none" stroke="#fff" strokeWidth="2.300" />
      </svg>
    ),
  },
  {
    name: 'Microsoft Store',
    icon: (
      <svg viewBox="0 0 35 35" className="size-[35px]">
        <path d="M9 7V1h17v6" fill="none" stroke="#1da5ec" strokeWidth="2" /><path d="M0 4h35v27q0 4-4 4H4q-4 0-4-4z" fill="#f1f1f1" /><path d="M9 7V1.500M26 7V1.500" stroke="#1da5ec" strokeWidth="2" />
        <path d="M10 12h7v7h-7z" fill="#f35325" /><path d="M18 12h7v7h-7z" fill="#81bc06" /><path d="M10 20h7v7h-7z" fill="#05a6f0" /><path d="M18 20h7v7h-7z" fill="#ffba08" />
      </svg>
    ),
  },
  {
    name: 'File Explorer', running: true,
    icon: (
      <svg viewBox="0 0 36 34" className="h-[34px] w-9">
        <path d="M0 2q0-2 2-2h9l4 4v6H0z" fill="#e2a108" /><path d="M0 7h12l3-3h19q2 0 2 2v26q0 2-2 2H2q-2 0-2-2z" fill="#ffd257" />
        <path d="M6 34V26q0-4 4-4h16q4 0 4 4v8z" fill="#1374c8" /><path d="M11 28h14" stroke="#0a4d8c" strokeWidth="1.500" />
      </svg>
    ),
  },
  {
    name: 'Edge', running: true,
    icon: (
      <svg viewBox="0 0 36 36" className="size-9">
        <defs><linearGradient id="eg" x1="0" y1="0" x2="1" y2=".4"><stop offset="0" stopColor="#1f9be0" /><stop offset=".6" stopColor="#35c9c4" /><stop offset="1" stopColor="#6fe05a" /></linearGradient></defs>
        <path d="M0 17C1 7 8 0 18 0c11 0 18 8 18 15 0 6-5 9-9 9-5 0-7-2-5-4 2-5-2-9-8-9-7 0-13 4-14 6z" fill="url(#eg)" />
        <path d="M0 17C2 11 8 8.500 13 9c-4 2-5 6-5 9 0 9 8 17 17 15.500C22 35.500 20 36 18 36 8 36-1 28 0 17z" fill="#1877d2" />
        <path d="M13 15c-3 8 2 15 11 15 4 0 8-1 10-3-3 6-9 9-14 8.500C11 34 8 27 8 21c0-3 2-5 5-6z" fill="#0f4c96" />
      </svg>
    ),
  },
  { name: 'Proton Mail', icon: <MailM id="pm1" className="h-[26px] w-[33px]" /> },
  {
    name: 'DuckDuckGo',
    icon: (
      <svg viewBox="0 0 33 33" className="size-[33px]">
        <circle cx="16.500" cy="16.500" r="16.500" fill="#de5833" /><circle cx="16.500" cy="16.500" r="13.800" fill="#de5833" stroke="#fff" strokeWidth="1.500" />
        <path d="M10 8q3-4 8-2 5 2 5 9l-2 4 1 10q-5 2-8 .5L11 17q-2-5-1-9z" fill="#fff" /><circle cx="14" cy="11.500" r="1.300" fill="#2d4f8e" /><circle cx="20" cy="11" r="1.300" fill="#2d4f8e" />
        <path d="M16 16.500q4-2.500 9-.5-2 2-5 2.500 3 1 4 1-4 2-8 0z" fill="#fdb924" /><path d="m15 24 4 1.500 4-2.500v5l-4-1-4 1.500z" fill="#4cba3c" />
      </svg>
    ),
  },
  { name: 'Proton Mail beta', icon: <MailM id="pm2" className="h-[22px] w-[27px]" /> },
  {
    name: 'Settings',
    icon: (
      <svg viewBox="0 0 36 36" className="size-9">
        <path d="m14.500 0 7 0 1.500 5 3.500 2L32 5.500 35.500 12 32 16v4l3.500 4-3.500 6.500L26.500 29 23 31l-1.500 5h-7L13 31l-3.500-2L4 30.500.5 24 4 20v-4L.5 12 4 5.500 9.500 7 13 5z" fill="#7b868f" />
        <circle cx="18" cy="18" r="9" fill="#e7edf1" /><circle cx="18" cy="18" r="6.500" fill="#0a62ba" />
      </svg>
    ),
  },
  { name: 'Fileside', active: true, icon: <FilesideLogo className="size-[33px]" /> },
  { name: 'Asana', running: true, icon: <AsanaIcon className="size-[29px]" /> },
];

function Taskbar() {
  return (
    <footer className={`flex h-[72px] shrink-0 items-center border-t-2 border-[#424242] bg-[#1c1c1c] text-white ${UI}`}>
      <div className="flex-1" />
      <div className="flex h-full shrink-0 pr-[78px]">
        {taskIcons.map((t) => (
          <button key={t.name} aria-label={t.name} className="flex h-full w-[67px] flex-col items-center pt-[5px]">
            <span className={`flex h-[59px] w-[58px] flex-col items-center justify-center rounded-md pt-[9px] ${t.active ? 'border border-[#383838] bg-[#2a2a2a]' : ''}`}>
              <span className="flex h-9 items-center">{t.icon}</span>
              <span className={`mt-[7px] h-[5px] rounded-full ${t.active ? 'w-6 bg-[#d79be6]' : t.running ? 'w-[9px] bg-[#9b9b9b]' : 'w-0'}`} />
            </span>
          </button>
        ))}
      </div>
      <div className="flex flex-1 items-center justify-end pr-[30px]">
        <button aria-label="Show hidden icons" className="mr-[26px]">
          <svg viewBox="0 0 18 10" className="h-[10px] w-[18px]"><path d="m1.500 9 7.500-7.500L16.500 9" fill="none" stroke="#fff" strokeWidth="2" /></svg>
        </button>
        <button aria-label="OneDrive" className="mr-[29px]">
          <svg viewBox="0 0 24 16" className="h-4 w-6"><path d="M5 9Q5 1 12 0q6-.5 8 6l-9 4z" fill="#8f8f8f" /><path d="M4.500 16Q0 16 0 11.500T4.500 7q2-3 6-1l4.500 3q2-3 5-2 4 1 4 4.500T20 16z" fill="#f1f1f1" /></svg>
        </button>
        <button aria-label="Safely remove hardware" className="mr-[25px]">
          <svg viewBox="0 0 19 24" className="h-6 w-[19px]" fill="none" stroke="#fff" strokeWidth="1.200"><path d="M2.500.600h9V7h-9zM.6 7h12.800v16.400H.6zM5 3.500h1m2.500 0h1" /><path d="m11 20 3 3 5-6" stroke="#9f9f9f" /></svg>
        </button>
        <button aria-label="Windows Security" className="mr-6">
          <svg viewBox="0 0 24 24" className="size-6">
            <path d="M11 0q5 3.500 11 3.500V12q0 7-11 12Q0 19 0 12V3.500Q6 3.500 11 0z" fill="#0e74cc" /><path d="M11 0v12H0V3.500Q6 3.500 11 0z" fill="#37bdf2" /><path d="M11 12v12Q0 19 0 12z" fill="#1791e0" />
            <path d="M16.500 10.500 23.500 24H9.500z" fill="#fcb816" /><path d="M16.500 15v4.500m0 1.500v1.500" stroke="#111" strokeWidth="1.500" />
          </svg>
        </button>
        <button aria-label="Wi-Fi" className="mr-3">
          <svg viewBox="0 0 24 18" className="h-[18px] w-6" fill="none" stroke="#fff" strokeWidth="1.800"><path d="M1 6.500q11-10.500 22 0M4.500 10q7.500-7.500 15 0M7.800 13.500q4.200-4 8.400 0" /><circle cx="12" cy="15.800" r="1.300" fill="#fff" /></svg>
        </button>
        <button aria-label="Volume muted" className="mr-3">
          <svg viewBox="0 0 24 18" className="h-[18px] w-6" fill="none" stroke="#fff" strokeWidth="1.600"><path d="M1 6h4l5-4.500v15L5 12H1zM14 5l8 8m0-8-8 8" /></svg>
        </button>
        <button aria-label="Battery charging" className="mr-[29px]">
          <svg viewBox="0 0 30 20" className="h-5 w-[30px]"><rect x="1" y="5" width="25" height="14" rx="4" fill="none" stroke="#fff" strokeWidth="1.800" /><rect x="3.500" y="7.500" width="20" height="9" rx="1" fill="#9bd79b" /><path d="M28 9.500q1.500 2.500 0 5" stroke="#fff" strokeWidth="1.800" fill="none" /><path d="m15.500 0-6 9H13l-1 5 6.500-8H15z" fill="#fff" stroke="#1c1c1c" strokeWidth=".7" /></svg>
        </button>
        <button className="text-right text-[17px] leading-6 whitespace-nowrap">5:07 AM<br />6/9/2025</button>
        <button aria-label="Notifications snoozed" className="ml-[13px]">
          <svg viewBox="0 0 20 24" className="h-6 w-5">
            <path d="M2 17V9q0-7 7-8h4l2 8h3v8l2 2H0zM6 21h7q-3.500 4-7 0z" fill="#fff" />
            <path d="M6 8.500h5l-5 6.500h5" fill="none" stroke="#1c1c1c" strokeWidth="1.600" />
            <path d="M13.500 2h4.500l-4.500 5H18" fill="none" stroke="#1c1c1c" strokeWidth="3.500" /><path d="M13.500 2h4.500l-4.500 5H18" fill="none" stroke="#fff" strokeWidth="1.500" />
          </svg>
        </button>
      </div>
    </footer>
  );
}

function Watermark() {
  return (
    <div aria-hidden="true" className="pointer-events-none absolute right-[42px] bottom-[36px] flex items-start gap-2">
      <svg viewBox="0 0 42 52" className="h-[52px] w-[42px]">
        <path d="M0 0h17v6H7v26h10v20L9 38H0z" fill="#c8324f" opacity=".65" />
        <path d="M25 0h17v38H25v-6h10V6H25z" fill="#2a8fc4" opacity=".65" />
      </svg>
      <span className="font-['Inter',sans-serif] text-[56px] leading-[38px] font-medium text-white/50">XDA</span>
    </div>
  );
}

export default function App() {
  return (
    <div className="relative flex h-screen flex-col overflow-hidden bg-[#191919]">
      <main className="flex min-h-0 flex-1">
        <FilesideWindow />
        <ExplorerWindow />
      </main>
      <Taskbar />
      <ColumnMenu />
      <Watermark />
    </div>
  );
}
